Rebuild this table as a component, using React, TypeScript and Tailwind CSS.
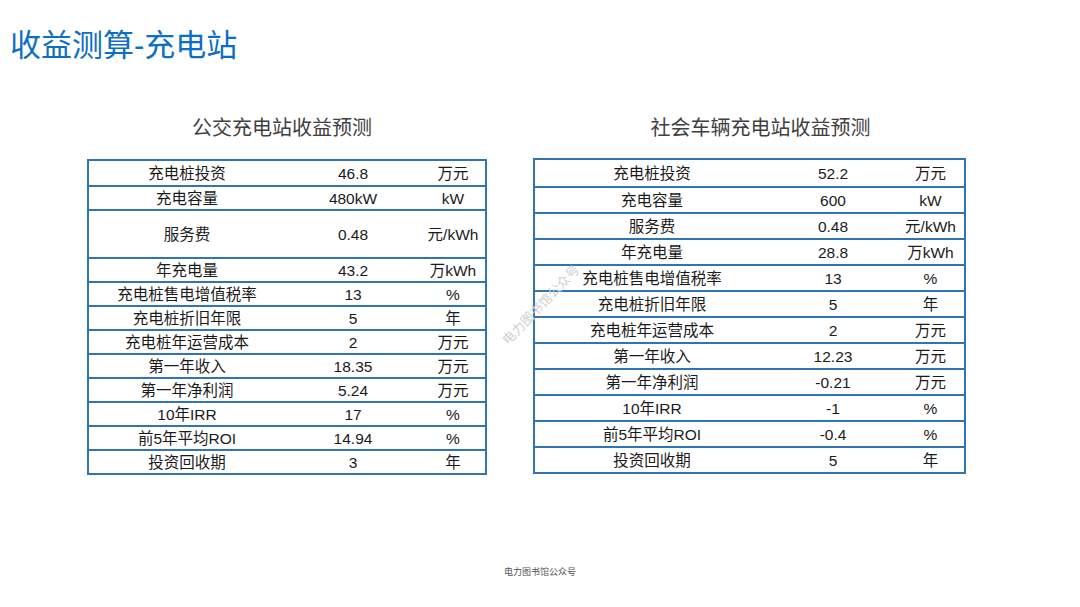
const font = { fontFamily: '"Liberation Sans", "Noto Sans CJK SC", sans-serif' };

type Row = [string, string, string, boolean?];

const busRows: Row[] = [
  ["充电桩投资", "46.8", "万元"],
  ["充电容量", "480kW", "kW"],
  ["服务费", "0.48", "元/kWh", true],
  ["年充电量", "43.2", "万kWh"],
  ["充电桩售电增值税率", "13", "%"],
  ["充电桩折旧年限", "5", "年"],
  ["充电桩年运营成本", "2", "万元"],
  ["第一年收入", "18.35", "万元"],
  ["第一年净利润", "5.24", "万元"],
  ["10年IRR", "17", "%"],
  ["前5年平均ROI", "14.94", "%"],
  ["投资回收期", "3", "年"],
];

const carRows: Row[] = [
  ["充电桩投资", "52.2", "万元"],
  ["充电容量", "600", "kW"],
  ["服务费", "0.48", "元/kWh"],
  ["年充电量", "28.8", "万kWh"],
  ["充电桩售电增值税率", "13", "%"],
  ["充电桩折旧年限", "5", "年"],
  ["充电桩年运营成本", "2", "万元"],
  ["第一年收入", "12.23", "万元"],
  ["第一年净利润", "-0.21", "万元"],
  ["10年IRR", "-1", "%"],
  ["前5年平均ROI", "-0.4", "%"],
  ["投资回收期", "5", "年"],
];

// row heights include the 2px top border (border-box)
function Table({ rows, cols, rowH, tallH }: { rows: Row[]; cols: string; rowH: string; tallH: string }) {
  return (
    <div className="border-2 border-[#2f75b5] text-[15.5px] text-[#1a1a1a]">
      {rows.map(([label, value, unit, tall], i) => (
        <div
          key={label}
          className={`grid ${cols} items-center pt-[2px] ${tall ? tallH : rowH} ${i > 0 ? "border-t-2 border-[#2f75b5]" : ""}`}
        >
          <div className="text-center leading-none whitespace-nowrap">{label}</div>
          <div className="text-center leading-none whitespace-nowrap">{value}</div>
          <div className="text-center leading-none whitespace-nowrap">{unit}</div>
        </div>
      ))}
    </div>
  );
}

export default function App() {
  return (
    <main className="relative w-[1080px] h-[607px] overflow-hidden bg-white" style={font}>
      <h1 className="pt-[31px] pl-[10px] text-[31px] leading-[30px] text-[#0d6fc4]">收益测算-充电站</h1>

      <section className="mt-[57px] flex items-start gap-[46px] pl-[87px]">
        <div className="w-[400px]">
          <h2 className="text-center text-[20px] leading-[20px] text-[#404040] pr-[10px]">公交充电站收益预测</h2>
          <div className="mt-[21px]">
            <Table rows={busRows} cols="grid-cols-[196px_136px_64px]" rowH="h-[24px]" tallH="h-[48px]" />
          </div>
        </div>
        <div className="w-[433px]">
          <h2 className="text-center text-[20px] leading-[20px] text-[#404040] pl-[22px]">社会车辆充电站收益预测</h2>
          <div className="mt-[20px]">
            <Table rows={carRows} cols="grid-cols-[234px_128px_67px]" rowH="h-[26px]" tallH="h-[26px]" />
          </div>
        </div>
      </section>

      <footer className="mt-[92px] text-center text-[9px] leading-[10px] text-[#555]">电力图书馆公众号</footer>

      <div className="absolute left-[541px] top-[305px] -translate-x-1/2 -translate-y-1/2 -rotate-[46deg] whitespace-nowrap text-[13px] leading-none text-[#cfcfcf]">
        电力图书馆公众号
      </div>
    </main>
  );
}
